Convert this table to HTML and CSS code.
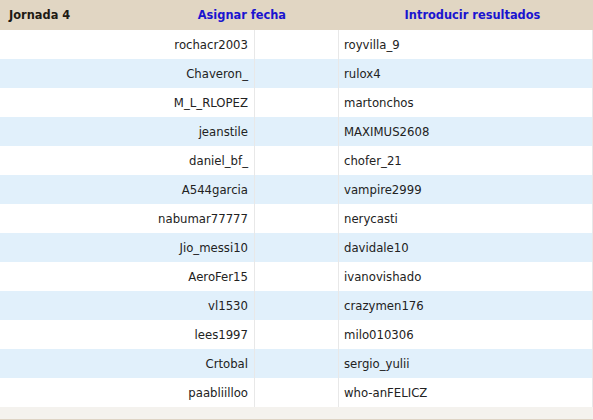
FILE: index.html
```html
<!DOCTYPE html>
<html>
<head>
<meta charset="utf-8">
<link rel="stylesheet" href="styles.css">
</head>
<body>
<div class="board">
  <div class="head">
    <div class="head-left">
      <span class="title">Jornada 4</span>
      <a class="link" href="#">Asignar fecha</a>
    </div>
    <div class="head-right">
      <a class="link" href="#">Introducir resultados</a>
    </div>
  </div>
  <div class="rows">
    <div class="row"><div class="c home">rochacr2003</div><div class="c mid"></div><div class="c away">royvilla_9</div></div>
    <div class="row alt"><div class="c home">Chaveron_</div><div class="c mid"></div><div class="c away">rulox4</div></div>
    <div class="row"><div class="c home">M_L_RLOPEZ</div><div class="c mid"></div><div class="c away">martonchos</div></div>
    <div class="row alt"><div class="c home">jeanstile</div><div class="c mid"></div><div class="c away">MAXIMUS2608</div></div>
    <div class="row"><div class="c home">daniel_bf_</div><div class="c mid"></div><div class="c away">chofer_21</div></div>
    <div class="row alt"><div class="c home">A544garcia</div><div class="c mid"></div><div class="c away">vampire2999</div></div>
    <div class="row"><div class="c home">nabumar77777</div><div class="c mid"></div><div class="c away">nerycasti</div></div>
    <div class="row alt"><div class="c home">Jio_messi10</div><div class="c mid"></div><div class="c away">davidale10</div></div>
    <div class="row"><div class="c home">AeroFer15</div><div class="c mid"></div><div class="c away">ivanovishado</div></div>
    <div class="row alt"><div class="c home">vl1530</div><div class="c mid"></div><div class="c away">crazymen176</div></div>
    <div class="row"><div class="c home">lees1997</div><div class="c mid"></div><div class="c away">milo010306</div></div>
    <div class="row alt"><div class="c home">Crtobal</div><div class="c mid"></div><div class="c away">sergio_yulii</div></div>
    <div class="row"><div class="c home">paabliilloo</div><div class="c mid"></div><div class="c away">who-anFELICZ</div></div>
  </div>
  <div class="foot"></div>
</div>
</body>
</html>
```
FILE: styles.css
```css
html, body {
  margin: 0;
  padding: 0;
  background: #ffffff;
}
.board {
  width: 593px;
  font-family: "DejaVu Sans", Verdana, sans-serif;
  color: #222;
}
.head {
  height: 30px;
  background: #e1d6c3;
  display: grid;
  grid-template-columns: 290px 1fr;
  align-items: center;
  font-weight: bold;
  font-size: 11.4px;
}
.head-left {
  display: flex;
  justify-content: space-between;
  padding: 0 4px 0 9px;
}
.head-right {
  text-align: center;
  padding-left: 62px;
}
.title {
  color: #1e1a14;
}
.link {
  color: #1a14d0;
  text-decoration: none;
}
.rows {
  font-size: 11.7px;
}
.row {
  display: grid;
  grid-template-columns: 255px 84px 1fr;
  height: 29px;
  background: #ffffff;
}
.row.alt {
  background: #e1f0fb;
}
.c {
  border-right: 1px solid #e8e8e8;
  display: flex;
  align-items: center;
  box-sizing: border-box;
}
.home {
  justify-content: flex-end;
  padding-right: 6px;
}
.away {
  padding-left: 5px;
}
.foot {
  height: 12px;
  background: #f4f2ee;
  border-bottom: 1px solid #ddd3c4;
}
```
